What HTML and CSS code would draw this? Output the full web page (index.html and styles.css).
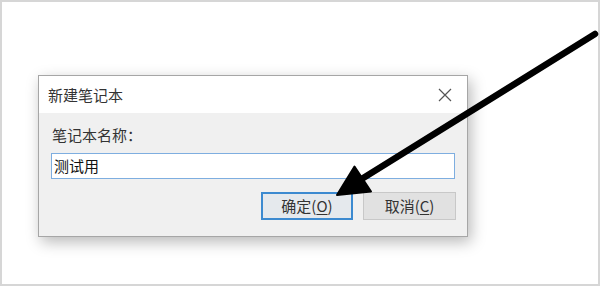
FILE: index.html
```html
<!DOCTYPE html>
<html lang="zh-CN">
<head>
<meta charset="utf-8">
<link rel="stylesheet" href="styles.css">
</head>
<body>
<div class="frame">
  <div class="dialog">
    <div class="titlebar">
      <span class="title">新建笔记本</span>
      <svg class="close" width="14" height="14" viewBox="0 0 14 14"><path d="M1 1 L13 13 M13 1 L1 13" stroke="#555" stroke-width="1.2" fill="none"/></svg>
    </div>
    <div class="body">
      <div class="label">笔记本名称：</div>
      <div class="input">测试用</div>
      <div class="buttons">
        <div class="btn btn-ok">确定(<u>O</u>)</div>
        <div class="btn">取消(<u>C</u>)</div>
      </div>
    </div>
  </div>
  <svg class="arrow" width="600" height="286" viewBox="0 0 600 286">
    <line x1="595" y1="34" x2="360" y2="180" stroke="#000" stroke-width="6.5" stroke-linecap="round"/>
    <polygon points="337,195 354.5,166.5 371,191.5" fill="#000" stroke="#000" stroke-width="2" stroke-linejoin="round"/>
  </svg>
</div>
</body>
</html>
```
FILE: styles.css
```css
html, body {
  margin: 0;
  padding: 0;
  background: #fff;
}
.frame {
  position: relative;
  width: 600px;
  height: 286px;
  box-sizing: border-box;
  border: 2px solid #d6d6d6;
  padding: 73px 0 0 36px;
  font-family: "Noto Sans CJK SC", "Noto Sans", sans-serif;
  font-size: 15px;
  color: #222;
}
.dialog {
  width: 430px;
  height: 162px;
  box-sizing: border-box;
  border: 1px solid #a6a6a6;
  background: #f0f0f0;
  box-shadow: 3px 5px 14px rgba(0,0,0,0.28);
  display: flex;
  flex-direction: column;
}
.titlebar {
  height: 37px;
  background: #fff;
  display: flex;
  align-items: center;
  justify-content: space-between;
  padding: 0 15px 0 9px;
  flex: none;
}
.title {
  line-height: 18px;
  color: #333;
}
.close {
  display: block;
}
.body {
  padding: 12px 11px 0 12px;
  display: flex;
  flex-direction: column;
}
.label {
  line-height: 20px;
  padding-left: 1px;
  color: #333;
}
.input {
  margin-top: 8px;
  height: 26px;
  box-sizing: border-box;
  border: 1px solid #7eaee0;
  background: #fff;
  line-height: 24px;
  padding-left: 2px;
  margin-right: 1px;
  color: #111;
}
.buttons {
  margin-top: 13px;
  display: flex;
  justify-content: flex-end;
  gap: 10px;
}
.btn {
  width: 93px;
  height: 28px;
  box-sizing: border-box;
  border: 1px solid #c8c8c8;
  background: #e1e1e1;
  display: flex;
  align-items: center;
  justify-content: center;
  color: #333;
  line-height: 20px;
}
.btn u {
  text-underline-offset: 2px;
}
.btn-ok {
  width: 92px;
  border: 2px solid #3c8ad0;
  background: #e5e9ed;
}
.arrow {
  position: absolute;
  left: -2px;
  top: -2px;
}
```
